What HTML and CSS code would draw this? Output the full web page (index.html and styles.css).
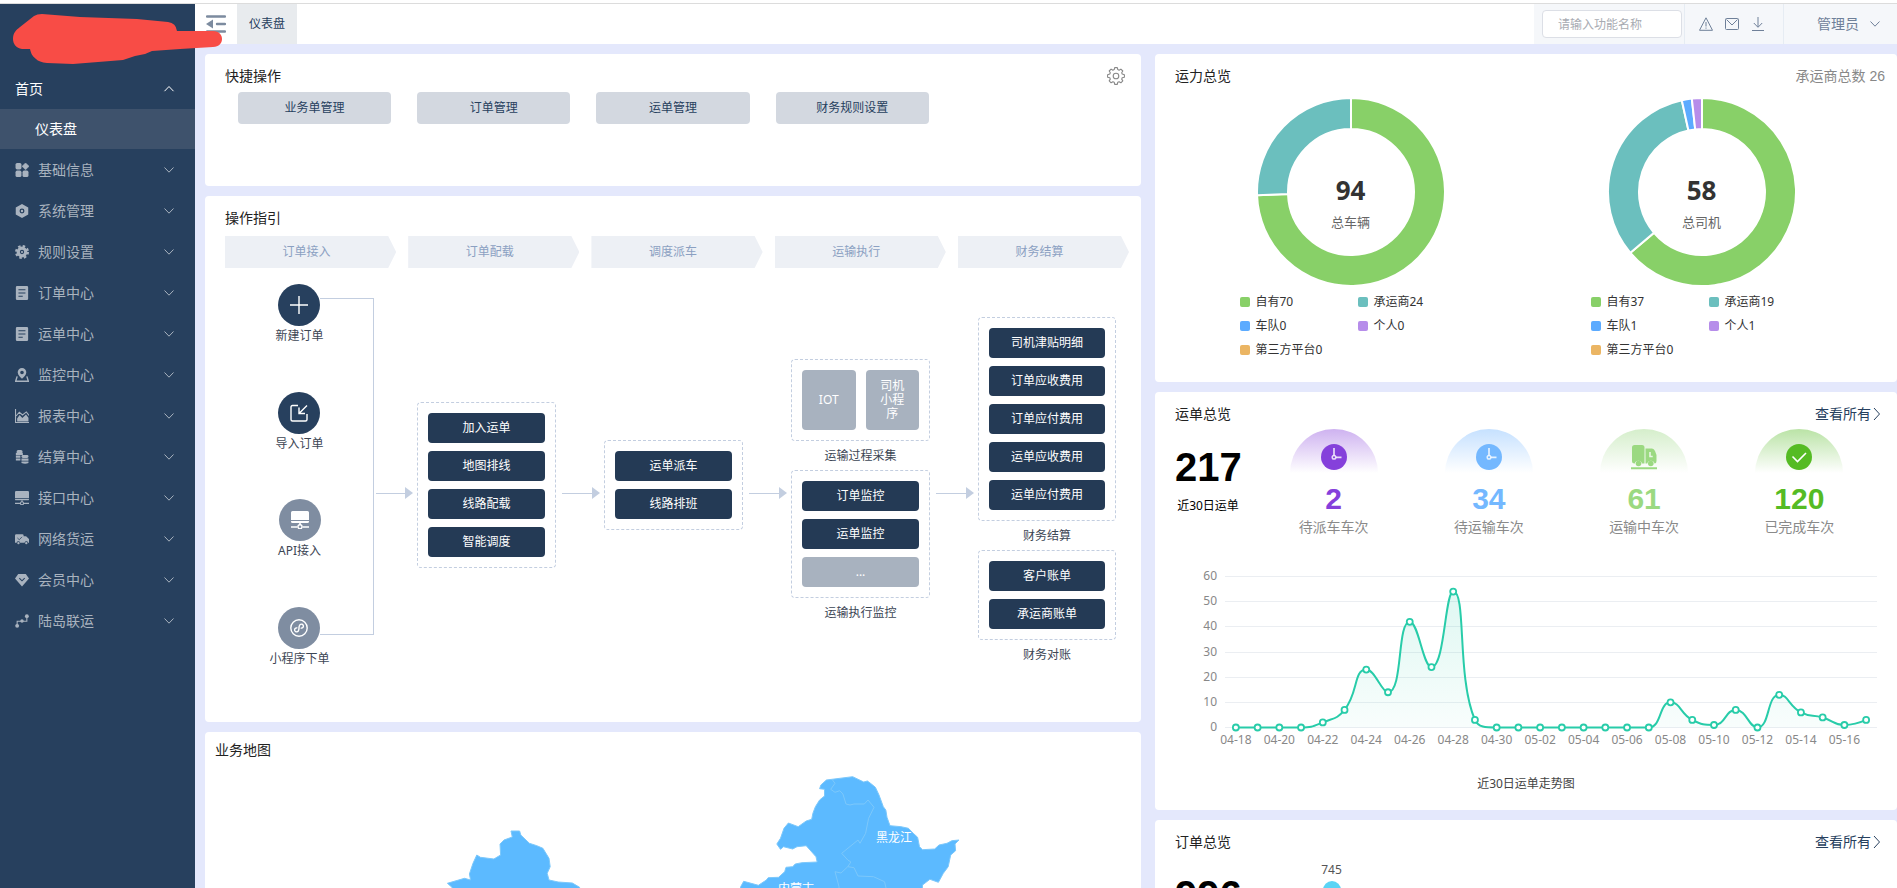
FILE: index.html
```html
<!DOCTYPE html>
<html lang="zh-CN">
<head>
<meta charset="utf-8">
<title>仪表盘</title>
<link rel="stylesheet" href="styles.css">
</head>
<body>
<svg class="defs" aria-hidden="true">
  <symbol id="down" viewBox="0 0 12 12"><path d="M1.5 3.5 6 8.2l4.500-4.700" fill="none" stroke="currentColor"/></symbol>
  <symbol id="up" viewBox="0 0 12 12"><path d="M1.500 8.200 6 3.500l4.500 4.700" fill="none" stroke="currentColor"/></symbol>
  <symbol id="right" viewBox="0 0 8 14"><path d="M1 1l5.500 6L1 13" fill="none" stroke="currentColor"/></symbol>
  <symbol id="net" viewBox="0 0 18 18"><path d="M1.500 0h15A1.500 1.500 0 0 1 18 1.500V9H0V1.500A1.500 1.500 0 0 1 1.500 0zM0 10h18v.500A1.500 1.500 0 0 1 16.500 12h-15A1.500 1.500 0 0 1 0 10.500z" fill="currentColor"/><path d="M9 12v2M0 16h6.500M11.500 16H18" stroke="currentColor" stroke-width="1.600"/><circle cx="9" cy="15.800" r="2" fill="none" stroke="currentColor" stroke-width="1.400"/></symbol>
  <symbol id="doc" viewBox="0 0 13 13"><path fill="currentColor" fill-rule="evenodd" d="M2 0h9a1.200 1.200 0 0 1 1.200 1.200v10.600A1.200 1.200 0 0 1 11 13H2a1.200 1.200 0 0 1-1.200-1.200V1.200A1.200 1.200 0 0 1 2 0zm1.200 3v1h6.500V3zm0 3v1h6.500V6zm0 3v1h4V9z"/></symbol>
  <symbol id="clock" viewBox="0 0 26 26"><circle cx="13" cy="13" r="13" fill="currentColor"/><path d="M13 4v7.500M14.800 13.300h5.700" stroke="#fff" stroke-opacity=".8" stroke-width="1.700"/><circle cx="13" cy="13.300" r="1.800" fill="none" stroke="#fff" stroke-opacity=".8" stroke-width="1.500"/></symbol>
</svg>

<div class="app">
  <aside class="sidebar">
    <div class="logo"></div>
    <nav class="nav">
      <button class="nav-item nav-open" type="button"><span>首页</span><svg class="chev"><use href="#up"/></svg></button>
      <a class="nav-sub" href="#">仪表盘</a>
      <button class="nav-item" type="button"><svg class="nico" viewBox="0 0 13 13"><g fill="currentColor"><rect x="0.500" width="5.500" height="6" rx="1.500"/><path d="M9.800 0 13 3.100 9.800 6.200 6.600 3.100z" stroke="currentColor" stroke-width=".6" stroke-linejoin="round"/><rect x="0.500" y="7" width="5.500" height="6" rx="1.500"/><rect x="7" y="7" width="5.500" height="6" rx="1.500"/></g></svg><span>基础信息</span><svg class="chev"><use href="#down"/></svg></button>
      <button class="nav-item" type="button"><svg class="nico" viewBox="0 0 13 13"><path fill="currentColor" fill-rule="evenodd" d="M6.500 0 12.300 3.200v6.600L6.500 13 .7 9.800V3.200zM6.500 4.200a2.300 2.300 0 1 0 0 4.600 2.300 2.300 0 0 0 0-4.600zm0 1.200a1.100 1.100 0 1 1 0 2.200 1.100 1.100 0 0 1 0-2.200z"/></svg><span>系统管理</span><svg class="chev"><use href="#down"/></svg></button>
      <button class="nav-item" type="button"><svg class="nico" viewBox="0 0 13 13"><circle cx="6.500" cy="6.500" r="3.500" fill="none" stroke="currentColor" stroke-width="3"/><circle cx="6.500" cy="6.500" r="5.500" fill="none" stroke="currentColor" stroke-width="2" stroke-dasharray="2.320 2"/><circle cx="6.500" cy="6.500" r="1" fill="currentColor"/></svg><span>规则设置</span><svg class="chev"><use href="#down"/></svg></button>
      <button class="nav-item" type="button"><svg class="nico"><use href="#doc"/></svg><span>订单中心</span><svg class="chev"><use href="#down"/></svg></button>
      <button class="nav-item" type="button"><svg class="nico"><use href="#doc"/></svg><span>运单中心</span><svg class="chev"><use href="#down"/></svg></button>
      <button class="nav-item" type="button"><svg class="nico" viewBox="0 0 13 13"><path fill="currentColor" fill-rule="evenodd" d="M6.500 0a4 4 0 0 1 4 4c0 2.500-2.500 4.600-4 6-1.500-1.400-4-3.500-4-6a4 4 0 0 1 4-4zm0 2.500a1.700 1.700 0 1 0 0 3.400 1.700 1.700 0 0 0 0-3.400z"/><path d="M2 7.800.6 12.300h11.800L11 7.800" fill="none" stroke="currentColor" stroke-width="1.300"/></svg><span>监控中心</span><svg class="chev"><use href="#down"/></svg></button>
      <button class="nav-item" type="button"><svg class="nico" viewBox="0 0 13 13"><path d="M.5 0v12.500H13" fill="none" stroke="currentColor"/><path d="M1 6.500 4 3l3 2.600 3.500-2.900L13 6" fill="none" stroke="currentColor"/><path d="M2 11.500V8.800L4.300 5.500l2.500 2.800 3.400-3.200 2.300 3v3.400z" fill="currentColor"/></svg><span>报表中心</span><svg class="chev"><use href="#down"/></svg></button>
      <button class="nav-item" type="button"><svg class="nico" viewBox="0 0 13 13"><g fill="currentColor"><rect x="1.500" width="5.500" height="3" rx="1.400"/><path d="M.8 2.600h6.500v2H.8zM.8 5.200H5v2H.8zM.8 7.800H5v2H.8z"/><rect x="6" y="4.600" width="6.500" height="2.800" rx="1.300"/><path d="M6 8h6.500v2H6zM6 10.600h6.500V12q-3 1.400-6.500 0z"/></g></svg><span>结算中心</span><svg class="chev"><use href="#down"/></svg></button>
      <button class="nav-item" type="button"><svg class="nico"><use href="#net"/></svg><span>接口中心</span><svg class="chev"><use href="#down"/></svg></button>
      <button class="nav-item" type="button"><svg class="nico" viewBox="0 0 13 13"><path fill="currentColor" d="M0 3.200A1.200 1.200 0 0 1 1.200 2h5.600A1.200 1.200 0 0 1 8 3.200V4h2.300L13 6.500v3.400h-.8a1.700 1.700 0 0 0-3.300 0H4.800a1.700 1.700 0 0 0-3.300 0H0z"/><circle cx="3.200" cy="10.300" r="1.100" fill="currentColor"/><circle cx="10.500" cy="10.300" r="1.100" fill="currentColor"/><path d="M2.200 5.500 4 7.200l2.500-2.700" fill="none" stroke="#27405e" stroke-width=".7"/></svg><span>网络货运</span><svg class="chev"><use href="#down"/></svg></button>
      <button class="nav-item" type="button"><svg class="nico" viewBox="0 0 13 13"><path fill="currentColor" d="M3 1h7l3 4-6.500 7.500L0 5z"/><path d="M4 4.800 6.500 7.300 9 4.800" fill="none" stroke="#27405e"/></svg><span>会员中心</span><svg class="chev"><use href="#down"/></svg></button>
      <button class="nav-item" type="button"><svg class="nico" viewBox="0 0 13 13"><g fill="currentColor"><circle cx="2" cy="11" r="1.800"/><circle cx="6.500" cy="6.500" r="1.600"/><circle cx="11" cy="2" r="1.800"/></g><path d="M2 11V6.800h9V2" fill="none" stroke="currentColor"/></svg><span>陆岛联运</span><svg class="chev"><use href="#down"/></svg></button>
    </nav>
  </aside>
  <svg class="scribble" viewBox="0 0 230 70" aria-hidden="true"><path fill="#f84c46" d="M13 39C13 33 16 30 20 27L34 16Q37 14 42 14L80 17 137 19 168 22Q176 23 177 31H213C219 31 222 35 222 39S219 47 213 47L180 49 152 51 145 54 135 56 123 60 98 62 73 64 47 63Q39 62 36 59C32 56 31 53 30 49L22 49C16 48 13 44 13 39z"/></svg>

  <div class="main">
    <header class="topbar">
      <button class="fold" type="button" aria-label="收起菜单"><svg width="20" height="18" viewBox="0 0 20 18"><path d="M1 1.500h18M11 9h8M1 16.500h18" stroke="#7c8b9f" stroke-width="2.400" stroke-linecap="round"/><path d="M0 9l7-4.500v9z" fill="#7c8b9f"/></svg></button>
      <a class="tab" href="#">仪表盘</a>
      <div class="top-right">
        <div class="search"><input type="text" placeholder="请输入功能名称" aria-label="功能名称"></div>
        <div class="tools">
          <button type="button" aria-label="告警"><svg width="14" height="14" viewBox="0 0 14 14"><path d="M7 .8 13.500 13.300H.5z" fill="none" stroke="currentColor" stroke-linejoin="round"/><path d="M7 5v4.500M7 10.500v1.200" stroke="currentColor"/></svg></button>
          <button type="button" aria-label="消息"><svg width="14" height="14" viewBox="0 0 14 14"><rect x=".5" y="1.500" width="13" height="11" rx="1" fill="none" stroke="currentColor"/><path d="M1.500 2.500 7 8l5.500-5.500" fill="none" stroke="currentColor"/></svg></button>
          <button type="button" aria-label="下载"><svg width="14" height="14" viewBox="0 0 14 14"><path d="M7 0v10M2.800 6 7 10.300 11.200 6M1 13.500h12" fill="none" stroke="currentColor"/></svg></button>
        </div>
        <button class="user" type="button"><span>管理员</span><svg class="chev"><use href="#down"/></svg></button>
      </div>
    </header>

    <main class="content">
      <div class="col">
        <section class="card quick">
          <div class="head"><h2>快捷操作</h2><button class="gear" type="button" aria-label="设置"><svg width="18" height="18" viewBox="0 0 18 18"><path id="gearPath" fill="none" stroke="currentColor" stroke-width="1.100" stroke-linejoin="round" d="M7.700.6h2.600l.5 2 1.300.6 1.800-1.100 1.900 1.900-1.100 1.800.5 1.200 2.200.7v2.600l-2.200.5-.5 1.300 1.100 1.800-1.900 1.900-1.800-1.100-1.300.5-.5 2.200H7.700l-.5-2.200-1.300-.5-1.800 1.100-1.900-1.900 1.100-1.800-.5-1.300-2.200-.5V7.700L2.800 7l.5-1.200L2.200 4l1.900-1.900 1.800 1.100 1.300-.6z"/><circle cx="9" cy="9" r="2.800" fill="none" stroke="currentColor" stroke-width="1.100"/></svg></button></div>
          <div class="quick-grid">
            <button type="button">业务单管理</button><button type="button">订单管理</button><button type="button">运单管理</button><button type="button">财务规则设置</button>
          </div>
        </section>

        <section class="card guide">
          <div class="head"><h2>操作指引</h2></div>
          <ol class="steps"><li>订单接入</li><li>订单配载</li><li>调度派车</li><li>运输执行</li><li>财务结算</li></ol>
          <div class="flow">
            <div class="entries">
              <button class="entry" type="button"><span class="disc"><svg width="18" height="18" viewBox="0 0 18 18"><path d="M9 0v18M0 9h18" stroke="#fff" stroke-width="1.400"/></svg></span>新建订单</button>
              <button class="entry" type="button"><span class="disc"><svg width="18" height="18" viewBox="0 0 18 18"><path d="M8 1.500H2.500Q1 1.500 1 3v12.500Q1 17 2.500 17h13q1.500 0 1.500-1.500V10M17 1.500 9.500 9M9 3.500v6h6" fill="none" stroke="#fff" stroke-width="1.400"/></svg></span>导入订单</button>
              <button class="entry" type="button"><span class="disc dim"><svg width="18" height="18"><use href="#net"/></svg></span>API接入</button>
              <button class="entry" type="button"><span class="disc dim"><svg width="18" height="18" viewBox="0 0 18 18" fill="none" stroke="#fff" stroke-width="1.400"><circle cx="9" cy="9" r="8.200"/><path d="M7.300 9A2 2 0 1 0 8.500 11.500Q9 10.500 9 9T9.500 6.500A2 2 0 1 1 10.700 9"/></svg></span>小程序下单</button>
            </div>
            <div class="arrow"></div>
            <div class="stage plain"><div class="box"><button type="button">加入运单</button><button type="button">地图排线</button><button type="button">线路配载</button><button type="button">智能调度</button></div></div>
            <div class="arrow"></div>
            <div class="stage plain"><div class="box"><button type="button">运单派车</button><button type="button">线路排班</button></div></div>
            <div class="arrow"></div>
            <div class="stage">
              <div class="box pair"><button class="off" type="button">IOT</button><button class="off" type="button">司机小程序</button></div>
              <p>运输过程采集</p>
              <div class="box"><button type="button">订单监控</button><button type="button">运单监控</button><button class="off" type="button">...</button></div>
              <p>运输执行监控</p>
            </div>
            <div class="arrow"></div>
            <div class="stage">
              <div class="box"><button type="button">司机津贴明细</button><button type="button">订单应收费用</button><button type="button">订单应付费用</button><button type="button">运单应收费用</button><button type="button">运单应付费用</button></div>
              <p>财务结算</p>
              <div class="box"><button type="button">客户账单</button><button type="button">承运商账单</button></div>
              <p>财务对账</p>
            </div>
          </div>
        </section>

        <section class="card map">
          <div class="head"><h2>业务地图</h2></div>
          <svg class="map-svg" viewBox="205 764 936 300" role="img" aria-label="业务地图">
            <g fill="#5cbaff" stroke="#7cc8fb" stroke-linejoin="round">
              <path d="M852.700 776.700 863.700 782 867.400 781 870.500 783.300 875.400 787.300 879 795 883.300 806.700 885.800 810 887 817.300 890 825.700 901 826.700 908.400 828.300 913.300 833.300 917.600 837.300 919.500 846.700 922.500 849.700 934.700 849 939 845 947 843.300 951.900 840.700 959 840 955 844 955.600 850.700 950.700 855 948.200 866.700 943.300 873.300 938.400 882.300 929.900 879.300 922.500 885 921 930H735L740.700 886.700 743.700 881.300 758.400 885.300 766.400 880 768.200 877.700 778.600 877.300 784.700 871.700 786 867.300 792.700 866.700 795.200 864 801.900 862.700 817.200 862 816 856.700 806.200 845.700 797 846.700 792.700 849 783.500 846.700 780.500 849.300 776.800 844 780.500 838.300 784 828.300 788.400 823 798.200 826.700 806.200 821 811.700 819.300 812.900 813.300 815.400 806.700 819.600 800 824.500 796 824.500 789.300 819.600 788.700 820.900 785 826.400 780z"/>
              <path fill="none" d="M832.500 780 835 783.300 830.700 789.300 835 792.300 839.800 790.700 842.900 794 846 804 850 805 854 804H864.300L868 800 874 807.300 868.600 818.300 865.600 833.300 860 843.300 858 840 841.700 853.300 847.800 860 850.900 862 847.800 866.700 854 867.700 858 876 873.500 876.700 884.500 881.700 887 892M847.800 866.700 841 873 835 871.700 839 886.700V900"/>
              <path d="M511 831H519.600L520.800 835 529.400 843.300 536.800 845.700 542.900 848.300 549 858.300 550.200 866.700 547.200 873.300 549 880 558.200 882 572.300 883 579.600 887.300V930H460L452 887.300 447.400 883.300 464.500 878.300 470.600 880 469.400 874 473 863.300 476.800 855 480.400 857.300 493.900 859 500.600 855 500 844 504 840 512.300 837z"/>
            </g>
            <g class="map-label"><text x="894" y="842">黑龙江</text><text x="796" y="893">内蒙古</text></g>
          </svg>
        </section>
      </div>

      <div class="col">
        <section class="card power">
          <div class="head"><h2>运力总览</h2><span class="note">承运商总数 26</span></div>
          <div class="donuts">
            <div class="donut-wrap">
              <div class="donut"><svg data-values="70,24,0,0,0" viewBox="-94 -94 188 188"></svg><div class="donut-text"><strong>94</strong><span>总车辆</span></div></div>
              <ul class="legend"><li class="c1">自有70</li><li class="c2">承运商24</li><li class="c3">车队0</li><li class="c4">个人0</li><li class="c5">第三方平台0</li></ul>
            </div>
            <div class="donut-wrap">
              <div class="donut"><svg data-values="37,19,1,1,0" viewBox="-94 -94 188 188"></svg><div class="donut-text"><strong>58</strong><span>总司机</span></div></div>
              <ul class="legend"><li class="c1">自有37</li><li class="c2">承运商19</li><li class="c3">车队1</li><li class="c4">个人1</li><li class="c5">第三方平台0</li></ul>
            </div>
          </div>
        </section>

        <section class="card waybill">
          <div class="head"><h2>运单总览</h2><a class="more" href="#">查看所有<svg width="8" height="14"><use href="#right"/></svg></a></div>
          <div class="stats">
            <div class="total"><strong>217</strong><span>近30日运单</span></div>
            <div class="stat purple"><div class="arc"><svg width="26" height="26"><use href="#clock"/></svg></div><strong>2</strong><span>待派车车次</span></div>
            <div class="stat blue"><div class="arc"><svg width="26" height="26"><use href="#clock"/></svg></div><strong>34</strong><span>待运输车次</span></div>
            <div class="stat lime"><div class="arc"><svg width="26" height="26" viewBox="0 0 26 26"><path fill="currentColor" d="M3.500 1H11q2.500 0 2.500 2.500v16H11a3.700 3.700 0 0 0-7.200 0H3.500Q1 19.500 1 17V3.500Q1 1 3.500 1zM14.500 4.500H21q2 0 3 2.500l1.500 4V17q0 2.500-2 2.500a3.700 3.700 0 0 0-7.200 0h-1.800zM0 23.200h26v2H0z"/><circle cx="7.500" cy="19.500" r="2.800" fill="currentColor"/><circle cx="19.800" cy="19.500" r="2.800" fill="currentColor"/><path d="M19 8v4.500h2.700" fill="none" stroke="#e9f6e4" stroke-width="1.600"/></svg></div><strong>61</strong><span>运输中车次</span></div>
            <div class="stat green"><div class="arc"><svg width="26" height="26" viewBox="0 0 26 26"><circle cx="13" cy="13" r="13" fill="currentColor"/><path d="M6.500 12.500 11.500 17.500 20 9" fill="none" stroke="#fff" stroke-width="1.600"/></svg></div><strong>120</strong><span>已完成车次</span></div>
          </div>
          <svg class="trend" viewBox="1175 560 702 190" role="img" aria-label="近30日运单走势图"></svg>
          <p class="caption">近30日运单走势图</p>
        </section>

        <section class="card orders">
          <div class="head"><h2>订单总览</h2><a class="more" href="#">查看所有<svg width="8" height="14"><use href="#right"/></svg></a></div>
          <div class="order-row">
            <div class="total"><strong>996</strong><span>近30日订单</span></div>
            <div class="bar"><span>745</span><i></i></div>
          </div>
        </section>
      </div>
    </main>
  </div>
</div>
<script src="charts.js"></script>
</body>
</html>
```

FILE: styles.css
```css
* { box-sizing: border-box; margin: 0; padding: 0; }
body { font: 12px/20px "Noto Sans", "Noto Sans CJK SC", sans-serif; color: #222; background: #fff; }
button { font: inherit; color: inherit; border: 0; background: none; cursor: pointer; }
a { color: inherit; text-decoration: none; }
ul, ol { list-style: none; }
svg { display: block; flex: none; }
.defs { position: absolute; width: 0; height: 0; }

.app { display: flex; height: 100vh; padding-top: 3px; border-bottom: 0; position: relative; overflow: hidden; }
.sidebar { flex: none; width: 195px; background: #27405e; border-top: 1px solid #dcdcdc; }
.scribble { position: absolute; left: 0; top: 0; width: 230px; height: 70px; pointer-events: none; }
.logo { height: 64px; }
.nav-item { display: flex; align-items: center; width: 100%; height: 41px; padding: 0 20px 0 15px; font-size: 14px; color: #a9b3bf; text-align: left; }
.nav-item span { flex: 1; }
.nav-open { color: #fff; }
.nav-sub { display: block; height: 40px; padding-left: 35px; font-size: 14px; line-height: 40px; color: #fff; background: #3e526c; }
.nico { width: 14px; height: 14px; margin-right: 9px; }
.chev { width: 12px; height: 12px; }

.main { flex: 1; min-width: 0; display: flex; flex-direction: column; }
.topbar { flex: none; display: flex; height: 41px; border-top: 1px solid #dcdcdc; background: #fff; }
.fold { display: flex; align-items: center; justify-content: center; width: 42px; padding-right: 0; }
.tab { width: 60px; line-height: 40px; text-align: center; color: #27405e; background: #e8ebee; }
.top-right { display: flex; margin-left: auto; background: #f5f7fa; color: #6f8099; }
.search { width: 150px; padding: 6px 2px 6px 8px; }
.search input { display: block; width: 100%; height: 28px; padding: 0 15px; font: inherit; border: 1px solid #dcdfe6; border-radius: 4px; background: #fff; outline: 0; }
.search input::placeholder { color: #a8abb2; opacity: 1; }
.tools { display: flex; align-items: center; justify-content: center; gap: 12px; width: 99px; border-left: 1px solid #e6ecf3; padding-right: 4px; }
.user { display: flex; align-items: center; justify-content: flex-end; gap: 10px; width: 114px; padding-right: 16px; border-left: 1px solid #e6ecf3; font-size: 14px; }

.content { flex: 1; min-height: 0; display: grid; grid-template-columns: 936fr 742fr; gap: 14px; align-items: start; padding: 10px 0 10px 10px; overflow-y: auto; scrollbar-width: none; background: #e4e8fc; }
.col { display: flex; flex-direction: column; gap: 10px; min-width: 0; }
.card { background: #fff; border-radius: 4px; padding: 12px 20px; }
.head { display: flex; justify-content: space-between; height: 20px; }
h2 { font-size: 14px; font-weight: 400; line-height: 20px; }

.quick { min-height: 132px; }
.gear { display: flex; align-items: center; width: 18px; margin-right: -4px; color: #888; }
.quick-grid { display: grid; grid-template-columns: repeat(5, 1fr); margin-top: 6px; }
.quick-grid button { height: 32px; margin: 0 13px; border-radius: 4px; background: #d3d8e0; color: #27405e; }

.guide { padding: 12px 0 20px 20px; }
.steps { display: grid; grid-template-columns: repeat(5, 1fr); margin-top: 8px; }
.steps li { height: 32px; margin-right: 12px; padding-right: 8px; line-height: 32px; text-align: center; color: #8ba0c2; background: #edf0f5; clip-path: polygon(0 0, calc(100% - 8px) 0, 100% 50%, calc(100% - 8px) 100%, 0 100%); }
.flow { display: grid; grid-template-columns: 149fr 43fr 139fr 48fr 139fr 48fr 139fr 48fr 138fr; align-items: center; min-height: 418px; margin-top: 16px; padding-right: 25px; }
.entries { position: relative; align-self: start; display: flex; flex-direction: column; align-items: center; justify-content: space-between; height: 385px; }
.entries::before { content: ""; position: absolute; left: calc(50% + 20px); right: 0; top: 14px; bottom: 34px; border: 1px solid #c3cee0; border-left: 0; }
.entry { position: relative; display: flex; flex-direction: column; align-items: center; color: #3c4654; }
.disc { display: flex; align-items: center; justify-content: center; width: 42px; height: 42px; border-radius: 50%; background: #27405e; color: #fff; }
.disc.dim { background: #7f8da1; }
.arrow { display: flex; align-items: center; margin: 0 4px 0 6px; }
.entries + .arrow { margin-left: 2px; }
.arrow::before { content: ""; flex: 1; height: 1px; background: #c3cee0; }
.arrow::after { content: ""; border: 6px solid transparent; border-left: 8px solid #c3cee0; border-right: 0; }
.stage.plain { padding-bottom: 16px; }
.stage p { line-height: 29px; text-align: center; color: #3c4654; }
.box { display: flex; flex-direction: column; gap: 8px; padding: 10px; border: 1px dashed #c3cee0; border-radius: 4px; }
.box button { height: 30px; border-radius: 4px; background: #243a55; color: #fff; }
.box .off { background: #a8b2bf; }
.box.pair { flex-direction: row; gap: 10px; }
.box.pair button { flex: 1; height: 60px; padding: 0 14px; line-height: 14px; }

.map { padding: 8px 0; }
.map .head { padding-left: 10px; }
.map-svg { width: 100%; margin-top: 4px; }
.map-label { font-size: 12px; fill: #fff; text-anchor: middle; }

.power { min-height: 328px; }
.note { margin-right: -8px; font: 14px/20px "Liberation Sans", "Noto Sans CJK SC", sans-serif; color: #888; }
.donuts { display: grid; grid-template-columns: 1fr 1fr; margin-top: 12px; }
.donut-wrap { display: flex; flex-direction: column; align-items: center; }
.donut { position: relative; width: 188px; height: 188px; }
.donut-text { position: absolute; inset: 0; display: flex; flex-direction: column; align-items: center; padding-top: 76px; font-size: 13px; color: #666; }
.donut-text strong { font-size: 26px; line-height: 32px; color: #333; }
.donut-text span { margin-top: 6px; }
.legend { display: grid; grid-template-columns: 118px 104px; line-height: 24px; margin-top: 4px; color: #333; }
.legend li { display: flex; align-items: center; gap: 6px; white-space: nowrap; }
.legend li::before { content: ""; width: 10px; height: 10px; border-radius: 2px; background: var(--c); }
.c1 { --c: #88d068; }
.c2 { --c: #6bbfbe; }
.c3 { --c: #5cabff; }
.c4 { --c: #b68dea; }
.c5 { --c: #ebb563; }

.waybill { padding-bottom: 16px; }
.more { display: flex; align-items: center; gap: 2px; margin-right: -4px; font-size: 14px; color: #27405e; }
.stats { display: grid; grid-template-columns: 81px repeat(4, 1fr); margin-top: 5px; }
.total { width: 66px; padding-top: 18px; text-align: center; color: #000; }
.total strong { display: block; font: bold 40px/40px "Liberation Sans", sans-serif; }
.total span { display: block; margin-top: 9px; white-space: nowrap; }
.stat { display: flex; flex-direction: column; align-items: center; }
.stat strong { margin-top: 10px; font: bold 30px/32px "Liberation Sans", sans-serif; color: var(--c); }
.stat span { margin-top: 2px; font-size: 14px; color: #8a8a8a; }
.arc { display: flex; justify-content: center; width: 88px; height: 44px; padding-top: 15px; border-radius: 44px 44px 0 0; color: var(--c); background: linear-gradient(var(--soft), #fff); }
.purple { --c: #8540db; --soft: #ceb2f0; }
.blue { --c: #74b8ff; --soft: #c6e1ff; }
.lime { --c: #9bd981; --soft: #d5eecb; }
.green { --c: #55bb24; --soft: #bae3a6; }
.trend { width: 100%; margin-top: 23px; }
.axis { font-size: 12px; fill: #888; }
.caption { margin-top: 24px; text-align: center; color: #444; }

.order-row { display: grid; grid-template-columns: 81px 155px; margin-top: 5px; }
.bar { display: flex; flex-direction: column; align-items: center; padding: 3px 4px 0 0; color: #555; }
.bar i { width: 18px; height: 150px; margin-top: 1px; border-radius: 9px 9px 0 0; background: linear-gradient(#5bd5f5, #4aa8f0); }
```

FILE: charts.js
```js
const COLORS = ['#88d068', '#6bbfbe', '#5cabff', '#b68dea', '#ebb563'];

function point(r, t) {
  return (r * Math.sin(t)).toFixed(2) + ' ' + (-r * Math.cos(t)).toFixed(2);
}

document.querySelectorAll('svg[data-values]').forEach(function (svg) {
  const values = svg.dataset.values.split(',').map(Number);
  const sum = values.reduce(function (a, b) { return a + b; }, 0);
  let start = 0, html = '';
  values.forEach(function (v, i) {
    if (!v) return;
    const end = start + v / sum * Math.PI * 2;
    const big = end - start > Math.PI ? 1 : 0;
    html += '<path fill="' + COLORS[i] + '" stroke="#fff" stroke-width="2" d="M' + point(94, start) +
      'A94 94 0 ' + big + ' 1 ' + point(94, end) + 'L' + point(63, end) +
      'A63 63 0 ' + big + ' 0 ' + point(63, start) + 'z"/>';
    start = end;
  });
  svg.innerHTML = html;
});

const series = [0, 0, 0, 0, 2, 7, 23, 14, 42, 24, 54, 3, 0, 0, 0, 0, 0, 0, 0, 0, 10, 3, 1, 7, 0, 13, 6, 4, 1, 3];
const STEP = 652 / 30, BASE = 727.5, UNIT = 151 / 60;
const pts = series.map(function (v, i) { return [1225 + STEP * (i + 0.5), BASE - v * UNIT]; });

function clamp(v, a, b) {
  return Math.max(Math.min(v, Math.max(a, b)), Math.min(a, b));
}

function smoothPath(p) {
  let d = 'M' + p[0].join(' '), out = p[0];
  for (let i = 1; i < p.length; i++) {
    const cur = p[i], prev = p[i - 1], next = p[i + 1];
    let into = cur, leave = cur;
    if (next) {
      const lp = Math.hypot(cur[0] - prev[0], cur[1] - prev[1]);
      const ln = Math.hypot(next[0] - cur[0], next[1] - cur[1]);
      const k = 0.5 * ln / (ln + lp);
      leave = [0, 1].map(function (a) { return clamp(cur[a] + (next[a] - prev[a]) * k, cur[a], next[a]); });
      into = [0, 1].map(function (a) { return clamp(cur[a] - (leave[a] - cur[a]) * lp / ln, prev[a], cur[a]); });
      leave = [0, 1].map(function (a) { return cur[a] + (cur[a] - into[a]) * ln / lp; });
    }
    d += 'C' + [out, into, cur].map(function (q) { return q[0].toFixed(2) + ' ' + q[1].toFixed(2); }).join(' ');
    out = leave;
  }
  return d;
}

const line = smoothPath(pts);
let chart = '<defs><linearGradient id="fade" x1="0" y1="0" x2="0" y2="1"><stop offset="0" stop-color="#28cca9" stop-opacity=".15"/><stop offset="1" stop-color="#28cca9" stop-opacity=".03"/></linearGradient></defs>';
for (let v = 0; v <= 60; v += 10) {
  const y = Math.round(BASE - v * UNIT - 0.5) + 0.5;
  chart += '<path d="M1225 ' + y + 'H1877" stroke="#ebeef2"/>' +
    '<text class="axis" text-anchor="end" x="1217" y="' + (y + 3) + '">' + v + '</text>';
}
chart += '<path d="' + line + 'V' + BASE + 'H' + pts[0][0] + 'z" fill="url(#fade)"/>' +
  '<path d="' + line + '" fill="none" stroke="#28cca9" stroke-width="2"/>';
pts.forEach(function (p, i) {
  chart += '<circle cx="' + p[0] + '" cy="' + p[1] + '" r="3" fill="#fff" stroke="#28cca9" stroke-width="1.8"/>';
  if (i % 2 === 0) {
    const day = 18 + i;
    const label = day <= 30 ? '04-' + day : '05-' + String(day - 30).padStart(2, '0');
    chart += '<text class="axis" text-anchor="middle" x="' + p[0] + '" y="744">' + label + '</text>';
  }
});
document.querySelector('.trend').innerHTML = chart;
```
